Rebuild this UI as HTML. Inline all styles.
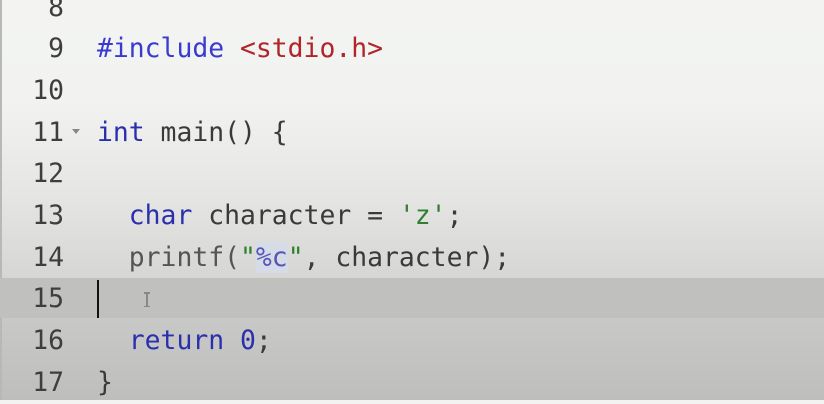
<!DOCTYPE html>
<html><head><meta charset="utf-8"><style>
html,body{margin:0;padding:0}
body{width:824px;height:400px;overflow:hidden;position:relative;
background:linear-gradient(to bottom,#f3f4f2 0px,#f2f3f1 100px,#e6e7e5 190px,#d6d6d4 277px,#c8c9c7 320px,#bebfbd 400px);
font-family:"DejaVu Sans Mono","Liberation Mono",monospace;font-size:26.4px;}
.edge{position:absolute;left:0;top:0;width:2px;height:400px;background:#b8b8b6}
.hl{position:absolute;left:0;top:278px;width:824px;height:40px;background:#c0c1bf}
.line{position:absolute;left:0;height:42px;line-height:42px;white-space:pre}
.num{position:absolute;right:760px;color:#3e3e3e;text-align:right}
.code{position:absolute;left:97px;color:#3a3a3a}
.k{color:#2b2fae}.p{color:#3a3ad0}.s{color:#b0242a}.g{color:#2f7f2f}.f{color:#555}
.pc{color:#5656b8;background:#d6dbe8}
.cur{position:absolute;left:97px;top:280px;width:2px;height:38px;background:#111}
.ib{position:absolute;left:146px;top:292px;width:2px;height:15px;background:#888}
.ib:before,.ib:after{content:"";position:absolute;left:-2px;width:6px;height:1.5px;background:#888}
.ib:before{top:0}.ib:after{bottom:0}
.fold{position:absolute;left:72px;top:129px;width:0;height:0;border-left:4px solid transparent;border-right:4px solid transparent;border-top:5px solid #888}
</style></head><body>
<div class="edge"></div>
<div class="hl"></div>
<div class="line" style="top:-13px;width:824px"><span class="num" style="right:760px">8</span></div>
<div class="line" style="top:28px;width:824px"><span class="num">9</span><span class="code"><span class="p">#include</span> <span class="s">&lt;stdio.h&gt;</span></span></div>
<div class="line" style="top:70px;width:824px"><span class="num">10</span></div>
<div class="line" style="top:112px;width:824px"><span class="num">11</span><span class="code"><span class="k">int</span> main() {</span></div>
<div class="fold"></div>
<div class="line" style="top:153px;width:824px"><span class="num">12</span></div>
<div class="line" style="top:195px;width:824px"><span class="num">13</span><span class="code">  <span class="k">char</span> character = <span class="g">'z'</span>;</span></div>
<div class="line" style="top:237px;width:824px"><span class="num">14</span><span class="code">  <span class="f">printf(</span><span class="g">"</span><span class="pc">%c</span><span class="g">"</span>, character);</span></div>
<div class="line" style="top:278px;width:824px"><span class="num">15</span></div>
<div class="cur"></div>
<div class="ib"></div>
<div class="line" style="top:320px;width:824px"><span class="num">16</span><span class="code">  <span class="k">return</span> <span class="k">0</span>;</span></div>
<div class="line" style="top:362px;width:824px"><span class="num">17</span><span class="code">}</span></div>
</body></html>
